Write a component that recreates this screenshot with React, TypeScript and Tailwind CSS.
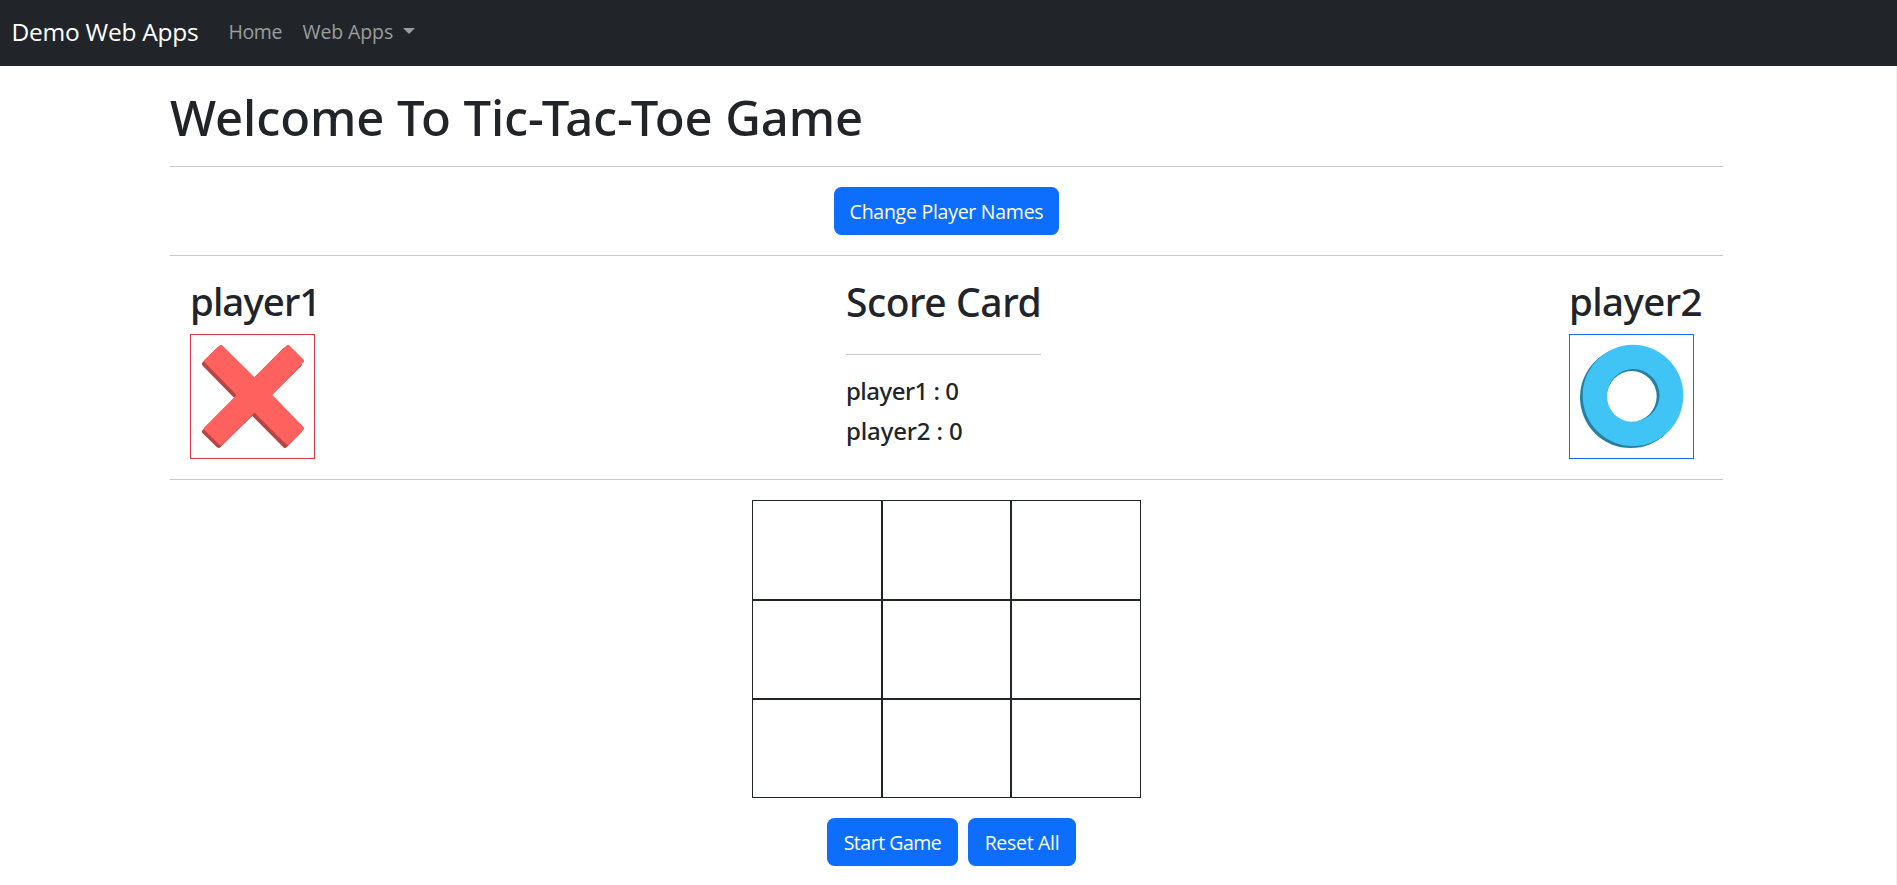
import React from "react";

function CrossMark() {
  return (
    <svg viewBox="3 3 369 369" className="h-full w-full">
      <g fill="#b54644" stroke="#b54644" strokeWidth="14" strokeLinejoin="round">
        <path d="M86 46 43 90 134 183 142 192 43 293 86 335 187 236 285 335 328 291 228 191 328 92 285 48 185 148Z" />
      </g>
      <g fill="#ff615e" stroke="#ff615e" strokeWidth="14" strokeLinejoin="round">
        <path d="M93 40 50 81 150 183 49 284 93 327 193 226 293 325 335 283 237 183 335 81 294 40 193 139Z" />
      </g>
    </svg>
  );
}

function RingMark() {
  return (
    <svg viewBox="3 3 369 369" className="h-full w-full">
      <circle cx="185" cy="190" r="152" fill="#25809f" />
      <ellipse cx="192" cy="184.5" rx="151" ry="152" fill="#3fc4f5" />
      <circle cx="193" cy="183.5" r="78.5" fill="#25809f" />
      <ellipse cx="188.5" cy="187" rx="74.5" ry="76" fill="white" />
    </svg>
  );
}

const button =
  "flex h-12 items-center justify-center rounded-[7.5px] bg-[#0d6efd] font-['Open_Sans',sans-serif] text-[19.5px] text-white";

function Rule() {
  return <hr className="border-t border-[#c8c9ca]" />;
}

export default function App() {
  return (
    <div className="flex h-[885px] w-full flex-col overflow-hidden bg-white font-['Noto_Sans',sans-serif] text-[#212529]">
      <nav className="flex h-[66px] shrink-0 items-center bg-[#212529] pb-[2px] pl-[11.5px] font-['Open_Sans',sans-serif] whitespace-nowrap">
        <a className="w-[217px] text-[24.5px] tracking-[-0.26px] text-white">Demo Web Apps</a>
        <a className="w-[74px] text-[19.5px] tracking-[-0.4px] text-[#9b9d9e]">Home</a>
        <a className="flex items-center text-[19.5px] tracking-[-0.1px] text-[#9b9d9e]">
          <span className="w-[100.5px]">Web Apps</span>
          <span className="mb-[2px] border-x-6 border-t-6 border-x-transparent border-t-[#9b9d9e]" />
        </a>
      </nav>
      <div className="flex flex-1 border-r border-[#f0f0f0]">
        <main className="ml-[170px] w-[1553px]">
          <h1 className="mt-[21px] mb-[19px] h-[60px] text-[49px] leading-[60px] font-medium tracking-[-0.1px]">
            Welcome To Tic-Tac-Toe Game
          </h1>
          <Rule />
          <div className="flex h-[88px] items-center justify-center">
            <button className={`${button} w-[225px] pt-px tracking-[-0.26px]`}>Change Player Names</button>
          </div>
          <Rule />
          <section className="flex h-[223px] justify-between px-5 pt-5">
            <div className="w-[128px]">
              <h2 className="mb-[10px] h-12 text-[38.5px] leading-[50px] font-medium tracking-[-0.95px]">player1</h2>
              <div className="h-[125px] w-[125px] border border-[#dc3545]">
                <CrossMark />
              </div>
            </div>
            <div className="w-[195px] whitespace-nowrap">
              <h2 className="mb-[30px] h-12 text-[39px] leading-[51px] font-medium tracking-[-0.45px]">Score Card</h2>
              <Rule />
              <p className="mt-[21px] text-[24px] leading-[30px] font-medium tracking-[-0.52px]">player1 : 0</p>
              <p className="mt-[10px] text-[24px] leading-[30px] font-medium tracking-[-0.15px]">player2 : 0</p>
            </div>
            <div className="w-[134px]">
              <h2 className="mb-[10px] h-12 text-[38.5px] leading-[50px] font-medium tracking-[-0.6px]">player2</h2>
              <div className="h-[125px] w-[125px] border border-[#0d6efd]">
                <RingMark />
              </div>
            </div>
          </section>
          <Rule />
          <div className="mx-auto mt-5 grid h-[298px] w-[389px] grid-cols-[130px_129px_130px] grid-rows-[100px_99px_99px]">
            {Array.from({ length: 9 }, (_, i) => (
              <div key={i} className="border border-[#212529]" />
            ))}
          </div>
          <div className="mt-5 ml-[657px] flex gap-[10px]">
            <button className={`${button} w-[131px] pt-px tracking-[-0.48px]`}>Start Game</button>
            <button className={`${button} w-[108px] pt-px tracking-[-0.3px]`}>Reset All</button>
          </div>
        </main>
      </div>
    </div>
  );
}
